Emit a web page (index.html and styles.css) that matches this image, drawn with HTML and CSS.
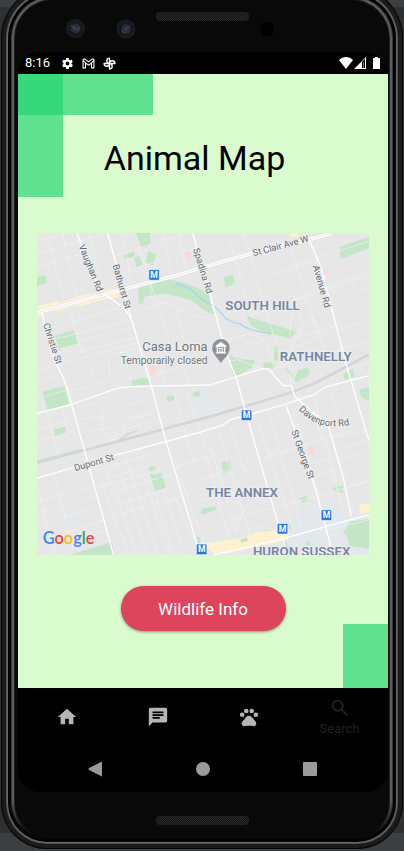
FILE: index.html
```html
<!DOCTYPE html>
<html lang="en">
<head>
<meta charset="utf-8">
<meta name="viewport" content="width=device-width, initial-scale=1">
<title>Animal Map</title>
<link rel="stylesheet" href="styles.css">
</head>
<body>
<div class="phone">
  <svg class="bezel-top" viewBox="18 0 370 52" aria-hidden="true">
    <defs>
      <pattern id="mesh" width="2" height="2" patternUnits="userSpaceOnUse"><rect width="2" height="2" fill="#141414"/><rect width="1" height="1" fill="#2c2c2c"/><rect x="1" y="1" width="1" height="1" fill="#242424"/></pattern>
      <radialGradient id="lens"><stop offset="0" stop-color="#343b46"/><stop offset=".45" stop-color="#252a31"/><stop offset=".6" stop-color="#11161a"/><stop offset="1" stop-color="#182026"/></radialGradient>
    </defs>
    <rect x="156" y="12" width="93" height="9" rx="4" fill="url(#mesh)"/>
    <circle cx="75.500" cy="28.500" r="9.500" fill="url(#lens)"/><path d="M71 25l4 5M77 31l3-4" stroke="#4b4a5c"/>
    <circle cx="126" cy="29" r="9.500" fill="url(#lens)"/><path d="M125 30l4-4M122 31l3 2" stroke="#4b4a5c"/>
    <circle cx="267" cy="29" r="7" fill="#000"/>
  </svg>

  <div class="screen">
    <div class="status">
      <span class="clock">8:16</span>
      <svg class="status-icon" viewBox="0 0 24 24"><path fill="#fff" fill-rule="evenodd" d="M19.400 13a7.500 7.500 0 0 0 0-2l2.100-1.700a.5.5 0 0 0 .1-.6l-2-3.500a.5.5 0 0 0-.6-.2l-2.500 1a7.300 7.300 0 0 0-1.700-1l-.4-2.600a.5.5 0 0 0-.5-.4h-4a.5.5 0 0 0-.5.4L9 5a7.700 7.700 0 0 0-1.700 1l-2.500-1a.5.5 0 0 0-.6.2l-2 3.500a.5.5 0 0 0 .1.6L4.500 11a7.500 7.500 0 0 0 0 2l-2.200 1.700a.5.5 0 0 0-.1.6l2 3.500c.1.200.4.3.6.2l2.500-1a7.300 7.300 0 0 0 1.700 1l.4 2.600c0 .2.200.4.5.4h4c.2 0 .5-.2.500-.4L15 19a7.700 7.700 0 0 0 1.700-1l2.500 1c.2.1.5 0 .6-.2l2-3.500a.5.5 0 0 0-.1-.6zM12 15.500a3.500 3.500 0 1 1 0-7 3.500 3.500 0 0 1 0 7z"/></svg>
      <svg class="status-icon" viewBox="0 0 24 24"><path fill="none" stroke="#fff" stroke-width="2" stroke-linejoin="round" d="M2 20V5.500C2 3.500 4 3 5.500 4L12 9l6.500-5C20 3 22 3.500 22 5.500V20h-4.500v-9L12 15l-5.500-4v9zM2 6l4.500 5M22 6l-4.500 5"/></svg>
      <svg class="status-icon" viewBox="0 0 24 24"><path fill="none" stroke="#fff" stroke-width="2.500" stroke-linejoin="round" d="M12 12V2a5 5 0 0 0 0 10M12 12h10a5 5 0 0 0-10 0M12 12v10a5 5 0 0 0 0-10M12 12H2a5 5 0 0 0 10 0"/></svg>
      <span class="spacer"></span>
      <svg class="signals" viewBox="0 0 42 14"><path fill="#fff" d="M0 4c4-4 10-4 14 0L7 13zM15 13L27 1v12z"/><path fill="#000" d="M23 6l3-3v9h-3z"/><path fill="#777" d="M24 6h1v6h-1z"/><path fill="#fff" d="M34 2h2V1h3v1h2v11h-7z"/></svg>
    </div>

    <main class="app">
      <span class="block block-row"></span>
      <span class="block block-column"></span>
      <span class="block block-corner"></span>
      <h1>Animal Map</h1>

      <svg class="map" viewBox="20 23 998 968" role="img" aria-label="Street map around Casa Loma">
        <defs>
          <g id="metro"><rect x="-16" y="-16" width="32" height="32" rx="3" fill="#2377e5" stroke="#fff" stroke-width="2"/><text class="metro-text" y="9">M</text></g>
        </defs>
        <path fill="#e7e7e7" d="M20 23h998v968H20z"/>
        <path fill="#e3e8ed" d="M110 850l60-12 15 35-75 20zM480 500l60-10 40 50-30 18-30 5zM845 850l80-30 10 50 80-15v136H700l10-55z"/>
        <path fill="#fdf1d0" d="M20 243l55-14 15 3 50-18 60-12 40-12 30 2-5 25-50 8-60 17-30 2-40 14-30-1-35 24zM520 958l100-15 60-20 70-8 30 10-5 20-60 15-120 26h-45zM988 842l30-8v28l-25 8zM778 23h25v12h-25z"/>
        <g fill="#c4e6c6">
          <path d="M317 23h42l3 30-15 15-15-5zM280 90l30-12 4 14-30 10zM312 100l14-7 12 25-18 10zM355 78l25 10-12 33-22-10zM20 156l25-7 6 23-31 11zM325 185l35-8 10-20 80 12 90 35v35l-30 5-30-20-80-20-55 10-8 23-12-3zM75 330l55-15 14 40-60 16zM305 465l50-9 5 23-55 3zM37 500l65-17 14 55-65 18zM70 615l37-12 5 20-38 13zM20 707l140-37v10L20 717zM410 514l20-4 3 16-20 4zM490 502l17-6 3 16-18 5zM355 725l18-5 3 15-17 7zM357 742l16 9 22-8 12 44-35 14zM517 860l40-14v8l-40 16z"/>
          <path d="M580 156l30-8 5 27-28 12zM930 65l88-31v35l-85 32zM510 190l30 50 15 28-20-7-25-14zM650 272l45 16 55 16 48 16-15 22-85-23-35-17zM735 360l12 5-3 45-12-5zM598 393l45 10 32 2-5 20-50 30-10-2zM700 414l30-5 5 18-35 5zM762 427l20 10 8 23zM805 434l30-5 5 15-10 15-20 5-5 8-12-5zM940 445l30-15 5 25-30 10zM990 495l28-10v45l-25-15zM575 713l25-7 6 31-28 8zM518 852l37-8 5 10-50 15zM905 790l35-8v22l-23-3zM808 820l22-9 7 14-20 11zM630 945l20-8 6 12-22 5zM775 898l10 4v12h-9zM830 945l10 5 3 15-16-4zM498 935l13 2v20h-12zM960 890l58-8v91l-58-9-10-34-11-5zM120 991l125-40 8 40zM755 940l10 5 18 33-20-15z"/>
        </g>
        <path fill="#fbd8d5" d="M463 80l17-8 10 20-20 10zM358 425l17-5 5 34-15 6zM875 138l20-5 5 12-22 6zM828 672l20-9 8 20-21 8z"/>

        <path class="lane" d="M50 23l50 200M95 23l45 190M175 23l45 170M275 23l30 150M315 23l65 210M400 23l25 130M445 23l25 120M20 85l210-60M20 128l200-63M245 95l190-60M255 150l250-85M20 45l95-22M640 23l115 390M600 50l70 230M780 60l75 240M690 155l180-50M715 250l303-100M665 270l150-50M790 120l228-72M820 205l198-65M965 150l15 50 38-12"/>
        <path class="lane" d="M120 255l35 130M75 305l205-60M80 340l220-55M140 350l180-50M145 382l180-48M20 437l300-85M20 475l60-20M20 522l70-22 90-15M330 255l60-20 45-10M385 235l38 135M440 250l20 95M180 430l10 35 30 10 20-20-5-50 10-15 70-20M240 475l30 10M345 460l120-40M360 180l5 40 85 30 30 20 60 10M390 420l20 70M455 410l20 70"/>
        <path class="lane" d="M600 310l50 40 60 10 20 60M590 345l70-20 60 25M735 430l35-12 45-25M785 395l-5-80 5-55M850 280l30 85 40 130M800 365l60-25 158-60M810 415l208-68M850 460l30-15M785 340l85-23 70-20M545 425l75-22 80 30M800 485l30 100M990 420l28-10M790 210l30 80-20 50-25 45 10 105"/>
        <path class="lane" d="M20 615l100-30M20 650l120-35M50 560l35 130M95 545l20 100M150 545l60-15M135 585l90-10M160 620l85-12M175 660l90-20M220 560q-15 65 15 75l45-10 5-40 90-30M220 560l25-30 60-25M285 540l60-15M300 585l70-20M260 620l100-30M430 495l40 145 25 90M470 500l40 120 80 300M400 595l100-28M530 570l50-15"/>
        <path class="lane" d="M25 800l50 190M70 745l60 230M20 830l165-45M20 865l185-55M20 910l170-65M35 950l185-65M20 980l210-65M185 700l110 290M220 705l100 286M255 700l100 291M220 880l260-70M285 690l100 301M320 690l100 301M355 740l75 251M400 790l60 201M430 810l70 150M225 760l150-40M240 805l190-60M250 840l190-55M430 700l100 280M440 725l130-38M200 735l180-50M190 790l200-55"/>
        <path class="lane" d="M540 660l80 260M565 610l100 340M600 600l50 160M680 565l110 350M715 555l100 350M790 560l30 90 60 210M850 560l30 90M510 765l170-60 190-60 148-30M510 830l150-40M580 890l350-95 88-30M580 890l20 50M640 860l-45-75M870 645l100-30M910 675l108-30M920 710l98-30M930 750l88-30M945 790l73-20M835 760l90-25M820 720l90-20M670 900l120 30M620 925l20-70M860 925l158-40M855 520l90 360M900 500l50 120"/>
        <path class="rail" d="M20 713l260-68 260-70 160-47 90-28 70-28 80-42 78-42"/><path fill="none" stroke="#d3d5d8" stroke-width="4" d="M260 650l35-24 25-8"/>
        <path fill="none" stroke="#a8d6ee" stroke-width="4" d="M438 177q35 5 55 25t40 32q25 8 42 32t55 30q20 20 95 30"/>

        <path class="road-edge" d="M20 262l205-55 215-57 100-30 120-34 180-43 65-20"/>
        <path class="road-wide" d="M20 262l205-55 215-57 100-30 120-34 180-43 65-20"/>
        <path class="road-line" d="M20 262l205-55 215-57 100-30 120-34 180-43 65-20"/>
        <path class="road" d="M140 23l45 112 30 70q70 35 90 80l63 215 37 140 95 315 15 36M232 23l73 262M35 262l25 108 15 40 25 50 12 35 53 190 85 305M488 23l57 202 45 165 28 65 32 115 100 345 25 76M830 23l45 107 75 290 68 228M20 760l240-70 250-68 70-22 20-15 160-45 90-30 40-25 60-15 68-18M20 565l100-25 125-45q30-10 60-10l235-5 80-25 80-25q20 0 28 15l32 37h25l10 33 100 85 45 155 25 120M768 540l32 85 55 160 55 206M550 991l200-46 140-40 128-35"/>

        <use href="#metro" x="372" y="149"/><use href="#metro" x="650" y="571"/><use href="#metro" x="890" y="871"/><use href="#metro" x="758" y="912"/><use href="#metro" x="515" y="974"/>

        <g class="street">
          <text transform="translate(145 62) rotate(68)">Vaughan Rd</text>
          <text transform="translate(247 120) rotate(74)">Bathurst St</text>
          <text transform="translate(489 72) rotate(73)">Spadina Rd</text>
          <text transform="translate(38 297) rotate(72)">Christie St</text>
          <text transform="translate(671 93) rotate(-15)">St Clair Ave W</text>
          <text transform="translate(849 123) rotate(74)">Avenue Rd</text>
          <text transform="translate(135 739) rotate(-16)">Dupont St</text>
          <text transform="translate(784 619) rotate(70)">St George St</text>
          <path id="davenport" fill="none" stroke="none" d="M806 554C850 598 885 616 985 596"/>
          <text><textPath href="#davenport">Davenport Rd</textPath></text>
        </g>
        <g class="area">
          <text x="586" y="254">SOUTH HILL</text>
          <text x="750" y="409">RATHNELLY</text>
          <text x="528" y="816">THE ANNEX</text>
          <text x="669" y="994">HURON SUSSEX</text>
        </g>
        <g class="place">
          <text class="place-name" x="533" y="377">Casa Loma</text>
          <text class="place-note" x="533" y="416">Temporarily closed</text>
        </g>
        <path fill="#8b9299" stroke="#fff" stroke-width="1" d="M573 417c-4-14-27-26-27-49a27 27 0 0 1 54 0c0 23-23 35-27 49z"/>
        <path fill="#fff" d="M557 362l16-12 16 12v4h-3v16h3v3h-32v-3h3v-16h-3z"/><path fill="none" stroke="#8b9299" stroke-width="3" d="M565 380v-13h16v13M570 380v-7h6v7"/>
        <text class="brand" x="37" y="959"><tspan fill="#4285f4">G</tspan><tspan fill="#ea4335">o</tspan><tspan fill="#fbbc05">o</tspan><tspan fill="#4285f4">g</tspan><tspan fill="#34a853">l</tspan><tspan fill="#ea4335">e</tspan></text>
      </svg>

      <button class="info" type="button">Wildlife Info</button>
    </main>

    <nav class="tabs" aria-label="Main">
      <a href="#home" aria-label="Home"><svg viewBox="0 0 24 24"><path d="M10 20v-6h4v6h5v-8h3L12 3 2 12h3v8z"/></svg></a>
      <a href="#messages" aria-label="Messages"><svg viewBox="0 0 24 24"><path d="M20 2H4c-1.100 0-1.990.9-1.990 2L2 22l4-4h14c1.100 0 2-.9 2-2V4c0-1.100-.9-2-2-2zM6 9h12v2H6V9zm8 5H6v-2h8v2zm4-6H6V6h12v2z"/></svg></a>
      <a href="#animals" aria-label="Animals"><svg viewBox="0 0 24 24"><circle cx="4.500" cy="9.500" r="2.500"/><circle cx="9" cy="5.500" r="2.500"/><circle cx="15" cy="5.500" r="2.500"/><circle cx="19.500" cy="9.500" r="2.500"/><path d="M17.340 14.860c-.87-1.020-1.600-1.890-2.480-2.910-.46-.54-1.050-1.080-1.750-1.320-.11-.04-.22-.07-.33-.09-.25-.04-.52-.04-.78-.04s-.53 0-.79.05c-.11.02-.22.05-.33.09-.7.24-1.280.78-1.750 1.320-.87 1.020-1.600 1.890-2.480 2.910-1.310 1.310-2.920 2.760-2.620 4.790.29 1.020 1.020 2.030 2.330 2.320.73.15 3.060-.44 5.540-.44h.18c2.480 0 4.810.58 5.540.44 1.310-.29 2.040-1.310 2.330-2.320.31-2.040-1.300-3.490-2.610-4.800z"/></svg></a>
      <a class="current" href="#search" aria-current="page"><svg viewBox="0 0 24 24"><path d="M15.500 14h-.79l-.28-.27A6.471 6.471 0 0 0 16 9.500 6.500 6.500 0 1 0 9.500 16c1.610 0 3.090-.59 4.230-1.570l.27.28v.79l5 4.990L20.490 19l-4.990-5zm-6 0C7.010 14 5 11.990 5 9.500S7.010 5 9.500 5 14 7.010 14 9.500 11.990 14 9.500 14z"/></svg><span>Search</span></a>
    </nav>

    <div class="system">
      <button type="button" aria-label="Back"><svg viewBox="0 0 16 16"><path d="M14 1v14q0 1-1 0L1 9q-1-1 0-2l12-6q1-1 1 0z"/></svg></button>
      <button type="button" aria-label="Home screen"><svg viewBox="0 0 16 16"><circle cx="8" cy="8" r="7"/></svg></button>
      <button type="button" aria-label="Recent apps"><svg viewBox="0 0 16 16"><rect x="1" y="1" width="14" height="14" rx="1"/></svg></button>
    </div>
  </div>

  <svg class="bezel-bottom" viewBox="18 792 370 57" aria-hidden="true"><rect x="156" y="816" width="93" height="9" rx="4" fill="url(#mesh)"/></svg>
</div>
</body>
</html>
```
FILE: styles.css
```css
* {
  box-sizing: border-box;
}

body {
  margin: 0;
  min-height: 100vh;
  overflow: hidden;
  background: linear-gradient(#3c3f41 7px, #2e3032 7px, #2e3032 833px, #3c3f41 833px);
  font-family: Roboto, "Liberation Sans", sans-serif;
}

svg {
  display: block;
}

/* Device frame: outer metal ring */
.phone {
  position: relative;
  margin: -14px 1px 0;
  padding: 14px 15px 0 17px;
  border-radius: 52px 52px 46px 46px;
  background: #090909;
  box-shadow:
    inset 0 0 0 1px #050505,
    inset 0 0 0 5px #1b1b1b,
    inset 0 0 0 6px #505052,
    inset 0 0 0 7px #6c6c70,
    inset 0 0 0 10px #030303;
}

/* Inner metal ring, which fades out towards the chin */
.phone::after {
  content: "";
  position: absolute;
  inset: 10px;
  border-radius: 42px 42px 36px 36px;
  box-shadow:
    inset 0 0 0 1px #39393c,
    inset 0 0 0 3px #5c5c62,
    inset 0 0 0 4px #202022;
  -webkit-mask-image: linear-gradient(#000 calc(100% - 40px), transparent calc(100% - 6px));
  mask-image: linear-gradient(#000 calc(100% - 40px), transparent calc(100% - 6px));
  pointer-events: none;
}

.bezel-top,
.bezel-bottom {
  width: 100%;
}

.screen {
  overflow: hidden;
  border-radius: 22px;
  background: #000;
}

.status {
  display: flex;
  align-items: center;
  height: 22px;
  padding: 0 7px;
  color: #fff;
}

.clock {
  width: 36px;
  font-size: 13px;
  line-height: 22px;
}

.status-icon {
  width: 13px;
  height: 13px;
  margin-right: 8px;
}

.spacer {
  flex: 1;
}

.signals {
  width: 42px;
  height: 14px;
}

.app {
  position: relative;
  display: flex;
  flex-direction: column;
  align-items: center;
  padding: 64px 19px 57px;
  background: #dafbcd;
}

.block {
  position: absolute;
  background: rgba(36, 212, 114, 0.67);
}

.block-row {
  top: 0;
  left: 0;
  width: 135px;
  height: 41px;
}

.block-column {
  top: 0;
  left: 0;
  width: 45px;
  height: 123px;
}

.block-corner {
  right: 0;
  bottom: 0;
  width: 45px;
  height: 64px;
}

h1 {
  margin: 0 17px 55px 0;
  color: #000;
  font-size: 34px;
  font-weight: 400;
  line-height: 40px;
}

.map {
  width: 100%;
  margin-bottom: 31px;
}

.lane,
.road,
.road-wide,
.road-edge,
.road-line,
.rail {
  fill: none;
}

.lane {
  stroke: #f1f1f1;
  stroke-width: 2px;
}

.road {
  stroke: #fff;
  stroke-width: 4px;
}

.road-edge {
  stroke: #dcdee0;
  stroke-width: 14px;
}

.road-wide {
  stroke: #fff;
  stroke-width: 11px;
}

.road-line {
  stroke: #dedede;
  stroke-width: 2px;
}

.rail {
  stroke: #d3d5d8;
  stroke-width: 8px;
}

.street text,
.area text,
.place text {
  paint-order: stroke;
  stroke: #f0f0f0;
  stroke-width: 5px;
  stroke-linejoin: round;
}

.street {
  fill: #636a70;
  font-size: 28px;
}

.area {
  fill: #7586a2;
  font-size: 40px;
  font-weight: 600;
}

.place {
  fill: #70757a;
  text-anchor: end;
}

.place-name {
  font-size: 39px;
}

.place-note {
  font-size: 31px;
}

.metro-text {
  fill: #fff;
  font-size: 26px;
  font-weight: 700;
  text-anchor: middle;
}

.brand {
  font-family: Lato, sans-serif;
  font-size: 49px;
  font-weight: 600;
}

.info {
  width: 165px;
  height: 45px;
  border: 0;
  border-radius: 23px;
  background: #dc455c;
  box-shadow: 0 1px 3px rgba(0, 0, 0, 0.4);
  color: #fff;
  font-family: inherit;
  font-size: 17px;
}

.tabs {
  display: flex;
  height: 58px;
  padding: 0 3px;
}

.tabs a {
  display: flex;
  flex: 1;
  flex-direction: column;
  align-items: center;
  justify-content: center;
  color: #b5b5b5;
  font-size: 13px;
  line-height: 16px;
  text-decoration: none;
}

.tabs svg {
  width: 22px;
  height: 22px;
  fill: currentColor;
}

.tabs .current {
  gap: 2px;
  color: #212121;
}

.system {
  display: flex;
  height: 46px;
  padding: 0 25px 0 24px;
}

.system button {
  display: flex;
  flex: 1;
  align-items: center;
  justify-content: center;
  padding: 0;
  border: 0;
  background: none;
}

.system svg {
  width: 16px;
  height: 16px;
  fill: #9a9a9a;
}
```
